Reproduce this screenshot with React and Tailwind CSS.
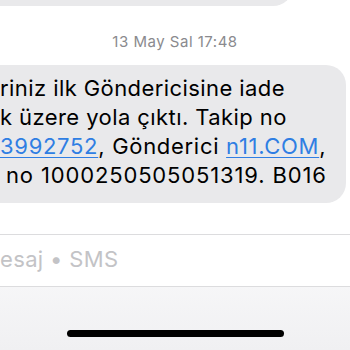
export default function App() {
  const link = 'text-[#2f7ee3] underline decoration-1 underline-offset-[3px]';
  const lines = [
    { cls: 'tracking-[0.42px]', body: <>riniz ilk Göndericisine iade</> },
    { cls: 'tracking-[0.42px]', body: <>k üzere yola çıktı. Takip no</> },
    {
      cls: 'tracking-[0.7px]',
      body: (
        <>
          <span className={link}>3992752</span>, Gönderici <span className={link}>n11.COM</span>,
        </>
      ),
    },
    { cls: 'tracking-[0.85px] pl-[6px]', body: <>no 1000250505051319. B016</> },
  ];

  return (
    <div className="flex h-[350px] w-[350px] flex-col overflow-hidden bg-white font-['Inter',sans-serif]">
      {/* previous bubble, mostly scrolled away */}
      <div className="-mt-[30px] h-[36px] w-[293px] shrink-0 rounded-br-[20px] bg-[#e9e9eb]" />

      <div className="mt-[27px] text-center text-[15px] leading-[18px] tracking-[0.5px] text-[#8a8a8e]">13 May Sal 17:48</div>

      <div className="mt-[14px] h-[138px] w-[346px] shrink-0 rounded-r-[20px] bg-[#e9e9eb] pt-[9px] text-[22px] leading-[29px] text-black">
        {lines.map((l, i) => (
          <div key={i} className={`whitespace-nowrap ${l.cls}`}>{l.body}</div>
        ))}
      </div>

      <div className="mt-[31px] flex flex-1 flex-col bg-gradient-to-b from-[#fbfbfc] to-[#f0f0f2]">
        <div className="flex h-[53px] items-center border-y border-[#dcdcde] bg-white text-[22px] tracking-[0.35px] text-[#c3c3c6]">
          <span className="pb-[2px]">esaj • SMS</span>
        </div>
        <div className="mt-[43px] flex justify-center">
          <div className="h-[7px] w-[217px] rounded-full bg-black" />
        </div>
      </div>
    </div>
  );
}
